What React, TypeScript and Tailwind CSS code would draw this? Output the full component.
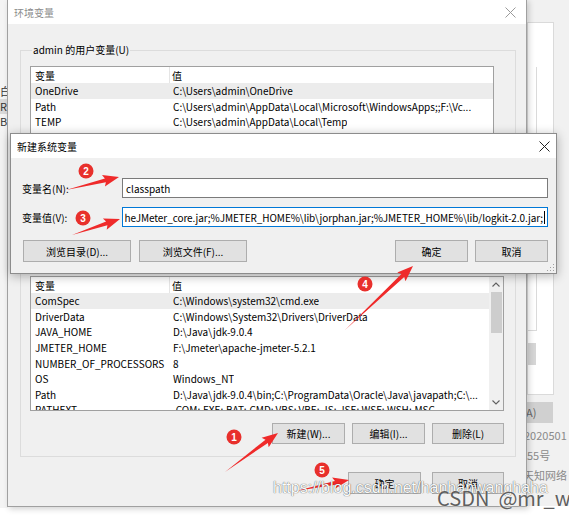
import React from "react";

const userRows: [string, string][] = [
  ["OneDrive", "C:\\Users\\admin\\OneDrive"],
  ["Path", "C:\\Users\\admin\\AppData\\Local\\Microsoft\\WindowsApps;;F:\\Vc..."],
  ["TEMP", "C:\\Users\\admin\\AppData\\Local\\Temp"],
  ["TMP", "C:\\Users\\admin\\AppData\\Local\\Temp"],
];

const sysRows: [string, string][] = [
  ["ComSpec", "C:\\Windows\\system32\\cmd.exe"],
  ["DriverData", "C:\\Windows\\System32\\Drivers\\DriverData"],
  ["JAVA_HOME", "D:\\Java\\jdk-9.0.4"],
  ["JMETER_HOME", "F:\\Jmeter\\apache-jmeter-5.2.1"],
  ["NUMBER_OF_PROCESSORS", "8"],
  ["OS", "Windows_NT"],
  ["Path", "D:\\Java\\jdk-9.0.4\\bin;C:\\ProgramData\\Oracle\\Java\\javapath;C:\\..."],
  ["PATHEXT", ".COM;.EXE;.BAT;.CMD;.VBS;.VBE;.JS;.JSE;.WSF;.WSH;.MSC"],
];

function Header() {
  return (
    <div className="flex h-[16px] shrink-0 items-center bg-white">
      <div className="flex h-full w-[139px] shrink-0 items-center border-r border-[#e5e5e5] pl-[4px]">变量</div>
      <div className="pl-[2px]">值</div>
    </div>
  );
}

function Row({ name, value, sel }: { name: string; value: string; sel?: boolean }) {
  return (
    <div className={sel ? "flex h-[15.6px] shrink-0 items-center whitespace-nowrap bg-[#ececec]" : "flex h-[15.6px] shrink-0 items-center whitespace-nowrap"}>
      <div className="w-[139px] shrink-0 pl-[4px]">{name}</div>
      <div className="overflow-hidden pl-[3px]">{value}</div>
    </div>
  );
}

function Btn({ label, w }: { label: string; w: string }) {
  return (
    <div className={`${w} flex h-full items-center justify-center border border-[#adadad] bg-[#e1e1e1]`}>{label}</div>
  );
}

function CloseX({ color }: { color: string }) {
  return (
    <svg width="11" height="11" viewBox="0 0 11 11">
      <path d="M0.5 0.5 L10.5 10.5 M10.5 0.5 L0.5 10.5" stroke={color} strokeWidth="1" />
    </svg>
  );
}

function arrowPts(x1: number, y1: number, x2: number, y2: number, hl = 14, hw = 12, sw = 4) {
  const dx = x2 - x1;
  const dy = y2 - y1;
  const L = Math.hypot(dx, dy);
  const ux = dx / L;
  const uy = dy / L;
  const nx = -uy;
  const ny = ux;
  const bx = x2 - ux * hl;
  const by = y2 - uy * hl;
  const p = [
    [x1, y1],
    [bx + (nx * sw) / 2, by + (ny * sw) / 2],
    [bx + (nx * hw) / 2 - ux * 2, by + (ny * hw) / 2 - uy * 2],
    [x2, y2],
    [bx - (nx * hw) / 2 - ux * 2, by - (ny * hw) / 2 - uy * 2],
    [bx - (nx * sw) / 2, by - (ny * sw) / 2],
  ];
  return p.map((q) => q.map((v) => v.toFixed(1)).join(",")).join(" ");
}

const arrows: [number, number, number, number][] = [
  [225, 472, 278, 433],
  [66, 190, 119, 177],
  [72, 235, 120, 219],
  [345, 330, 413, 266],
  [296, 491, 349, 480],
];

const badges: [number, number, string][] = [
  [234, 437, "1"],
  [86, 171, "2"],
  [83, 218, "3"],
  [365, 284, "4"],
  [322, 470, "5"],
];

export default function App() {
  return (
    <div className="relative h-[517px] w-[569px] overflow-hidden bg-white font-['Noto_Sans_CJK_SC','Noto_Sans',sans-serif] text-[10px] leading-[15px] text-black">
      {/* left background window */}
      <div className="absolute left-0 top-0 flex h-[508px] w-[8px] flex-col bg-[#f4f4f4] pt-[84px] text-[11px] text-[#333]">
        <span className="leading-[15px]">白</span>
        <span className="bg-[#d9d9d9] leading-[15px]">R</span>
        <span className="leading-[15px]">B</span>
      </div>

      {/* right background window */}
      <div className="absolute left-[518px] top-0 flex h-[506px] w-[51px] flex-col bg-[#f1f1f1]">
        <div className="ml-[9px] mt-[22px] flex h-[373px] w-[27px] flex-col border border-[#dadada] bg-white">
          <div className="mt-[44px] h-[264px] w-[9px] border-r border-b border-[#dadada]"></div>
          <div className="mt-[12px] h-[22px] w-[8px] bg-[#d6d6d6]"></div>
        </div>
        <div className="ml-[7px] mt-[7px] flex h-[21px] w-[28px] items-center bg-[#d0d0d0] pl-[1px] text-[11px] text-[#666]">A)</div>
        <div className="ml-[6px] mt-[2px] text-[11px] leading-[20px] text-[#8a8a8a]">2020501</div>
        <div className="ml-[9px] text-[11px] leading-[20px] text-[#8a8a8a]">55号</div>
        <div className="ml-[5px] whitespace-nowrap text-[11px] leading-[20px] text-[#8a8a8a]">天知网络</div>
      </div>

      {/* environment variables dialog */}
      <div className="absolute left-[7px] top-[-1px] flex h-[508px] w-[520px] flex-col border border-[#a0a0a0] bg-[#f0f0f0] shadow-[2px_2px_6px_rgba(0,0,0,0.18)]">
        <div className="flex h-[24px] shrink-0 items-center justify-between bg-white pl-[6px] pr-[10px] text-[#8c8c8c]">
          <span>环境变量</span>
          <CloseX color="#9a9a9a" />
        </div>

        <fieldset className="ml-[12px] mt-[18px] h-[203px] w-[496px] shrink-0 border border-[#dcdcdc] px-[9px] pt-[8px]">
          <legend className="ml-[2px] px-[1px] leading-[16px]">admin 的用户变量(U)</legend>
          <div className="flex h-[130px] w-[464px] flex-col overflow-hidden border border-[#a0a0a0] bg-white">
            <Header />
            {userRows.map((r, i) => (
              <Row key={i} name={r[0]} value={r[1]} sel={i === 0} />
            ))}
          </div>
        </fieldset>

        <fieldset className="ml-[12px] mt-[7px] w-[496px] shrink-0 border border-[#dcdcdc] pb-[12px] pl-[9px] pr-[11px] pt-[8px]">
          <legend className="ml-[2px] px-[1px] leading-[16px]">系统变量(S)</legend>
          <div className="flex h-[135px] w-[474px] overflow-hidden border border-[#a0a0a0] bg-white">
            <div className="flex min-w-0 flex-1 flex-col overflow-hidden">
              <Header />
              {sysRows.map((r, i) => (
                <Row key={i} name={r[0]} value={r[1]} sel={i === 0} />
              ))}
            </div>
            <div className="flex w-[14px] shrink-0 flex-col items-center bg-[#f0f0f0]">
              <div className="flex h-[15px] items-center justify-center">
                <svg width="8" height="5" viewBox="0 0 8 5">
                  <path d="M0.5 4.5 L4 1 L7.5 4.5" stroke="#606060" strokeWidth="1.1" fill="none" />
                </svg>
              </div>
              <div className="h-[41px] w-[11px] bg-[#cdcdcd]"></div>
              <div className="flex-1"></div>
              <div className="flex h-[15px] items-center justify-center">
                <svg width="8" height="5" viewBox="0 0 8 5">
                  <path d="M0.5 0.5 L4 4 L7.5 0.5" stroke="#606060" strokeWidth="1.1" fill="none" />
                </svg>
              </div>
            </div>
          </div>
          <div className="mt-[12px] flex h-[21px] justify-end gap-[7px]">
            <Btn label="新建(W)..." w="w-[73px]" />
            <Btn label="编辑(I)..." w="w-[73px]" />
            <Btn label="删除(L)" w="w-[72px]" />
          </div>
        </fieldset>

        <div className="mt-[15px] flex h-[22px] shrink-0 justify-end gap-[11px] pr-[22px]">
          <Btn label="确定" w="w-[73px]" />
          <Btn label="取消" w="w-[72px]" />
        </div>
      </div>

      {/* new system variable dialog */}
      <div className="absolute left-[10px] top-[133px] flex h-[141px] w-[547px] flex-col border border-[#8c8c8c] bg-[#f0f0f0] shadow-[0_2px_10px_rgba(0,0,0,0.3)]">
        <div className="flex h-[24px] shrink-0 items-center justify-between bg-white pl-[6px] pr-[6px]">
          <span>新建系统变量</span>
          <CloseX color="#222" />
        </div>
        <div className="flex flex-col pl-[11px] pr-[8px]">
          <div className="mt-[20px] flex h-[20px] items-center">
            <span className="w-[100px] shrink-0">变量名(N):</span>
            <div className="flex h-[20px] w-[426px] items-center border border-[#7a7a7a] bg-white pl-[3px]">classpath</div>
          </div>
          <div className="mt-[9px] flex h-[20px] items-center">
            <span className="w-[100px] shrink-0">变量值(V):</span>
            <div className="flex h-[20px] w-[426px] items-center justify-end overflow-hidden whitespace-nowrap border border-[#0078d7] bg-white pr-[2px]">
              <span className="tracking-[-0.08px]">heJMeter_core.jar;%JMETER_HOME%\lib\jorphan.jar;%JMETER_HOME%\lib/logkit-2.0.jar;</span>
              <span className="ml-[1px] h-[13px] w-[1px] shrink-0 bg-black"></span>
            </div>
          </div>
          <div className="mt-[13px] flex h-[22px] items-stretch pl-[1px]">
            <Btn label="浏览目录(D)..." w="w-[108px]" />
            <div className="w-[8px]"></div>
            <Btn label="浏览文件(F)..." w="w-[108px]" />
            <div className="flex-1"></div>
            <Btn label="确定" w="w-[73px]" />
            <div className="w-[7px]"></div>
            <Btn label="取消" w="w-[73px]" />
          </div>
        </div>
        <svg className="absolute bottom-[1px] right-[1px]" width="8" height="8" viewBox="0 0 8 8">
          <rect x="6" y="0" width="1" height="1" fill="#a0a0a0" />
          <rect x="3" y="3" width="1" height="1" fill="#a0a0a0" />
          <rect x="6" y="3" width="1" height="1" fill="#a0a0a0" />
          <rect x="0" y="6" width="1" height="1" fill="#a0a0a0" />
          <rect x="3" y="6" width="1" height="1" fill="#a0a0a0" />
          <rect x="6" y="6" width="1" height="1" fill="#a0a0a0" />
        </svg>
      </div>

      {/* annotations */}
      <svg className="pointer-events-none absolute left-0 top-0" width="569" height="517" viewBox="0 0 569 517">
        {arrows.map((a, i) => (
          <polygon key={i} points={arrowPts(a[0], a[1], a[2], a[3])} fill="#ef2a2a" />
        ))}
        {badges.map((b, i) => (
          <g key={i}>
            <circle cx={b[0]} cy={b[1]} r="7.5" fill="#e8302c" />
            <text x={b[0]} y={b[1] + 3.5} textAnchor="middle" fontSize="10" fontWeight="700" fill="#fff" fontFamily="Liberation Sans, sans-serif">
              {b[2]}
            </text>
          </g>
        ))}
      </svg>

      {/* watermarks */}
      <div className="pointer-events-none absolute left-[273px] top-[479px] whitespace-nowrap font-['Liberation_Sans',sans-serif] text-[16px] leading-[18px] text-[#fafafa] [text-shadow:0_0_1px_rgba(0,0,0,0.55),0_0_1px_rgba(0,0,0,0.4)]">
        https://blog.csdn.net/hanhanwanghaha
      </div>
      <div className="pointer-events-none absolute left-[437px] top-[486px] flex whitespace-nowrap text-[20px] leading-[23px] text-[#5f5f5f] [text-shadow:0_0_2px_rgba(255,255,255,0.9)]">
        <span>CSDN</span>
        <span className="ml-[9px]">@mr_wanghaha</span>
      </div>
    </div>
  );
}
